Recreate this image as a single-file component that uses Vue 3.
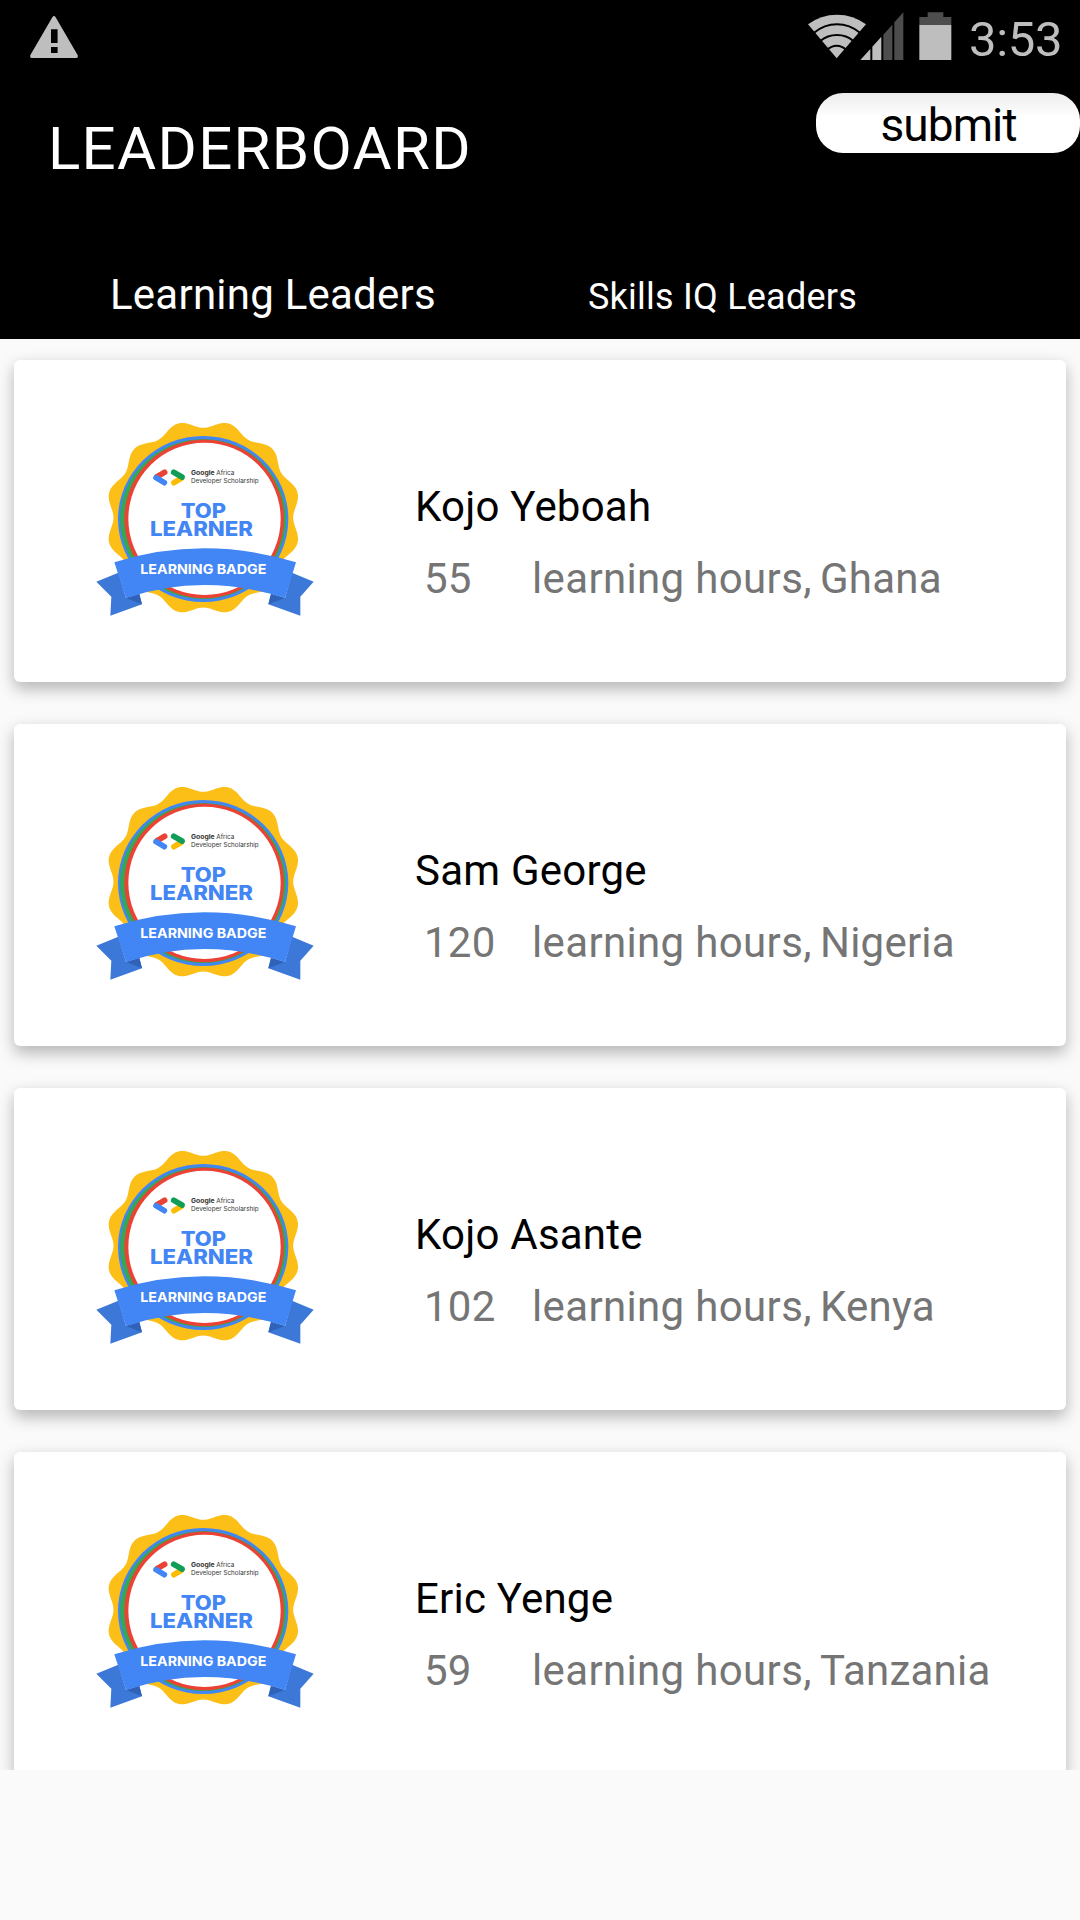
<script setup>
const leaders = [
  { name: 'Kojo Yeboah', hours: 55, country: 'Ghana' },
  { name: 'Sam George', hours: 120, country: 'Nigeria' },
  { name: 'Kojo Asante', hours: 102, country: 'Kenya' },
  { name: 'Eric Yenge', hours: 59, country: 'Tanzania' },
]

// Twelve-lobed scalloped edge of the badge
const scallop = Array.from({ length: 240 }, (_, i) => {
  const a = (i * 2 * Math.PI) / 240
  const r = 281 - 11.5 * Math.cos(12 * a)
  return `${(370 + r * Math.sin(a)).toFixed(1)},${(353 - r * Math.cos(a)).toFixed(1)}`
}).join(' ')
</script>

<template>
  <div class="screen">
    <header class="header">
      <div class="status">
        <svg class="warning" width="48" height="42" viewBox="0 0 48 42">
          <path fill="#bebebe" fill-rule="evenodd" d="M22.5 1Q24 -1 25.5 1L47.6 39Q48.6 42 46 42H2Q-.6 42 .4 39ZM21 13.3V27H27.6V13.3ZM21 31V37H27.6V31Z" />
        </svg>
        <svg class="indicators" width="144" height="60" viewBox="83 0 432 180">
          <path fill="#bebebe" d="M83 73Q121 44 170 44T257 73L169 175Z" />
          <g fill="none" stroke="#000" stroke-width="6">
            <path d="M100 99Q132 73 170 73T240 99" />
            <path d="M120 123Q141 105 170 105T219 123" />
            <path d="M140 150Q153 137 169 137T198 150" />
          </g>
          <path fill="#bebebe" d="M240 180L270 147V180ZM276 140L303 110V180H276Z" />
          <path fill="#4d4d4d" d="M309 104L336 74V180H309ZM342 67L369 37V180H342ZM442 37H489V51H513V75H417V51H442Z" />
          <path fill="#bebebe" d="M417 75H513V180H417Z" />
        </svg>
        <span class="clock">3:53</span>
      </div>
      <div class="titlebar">
        <h1 class="title">LEADERBOARD</h1>
        <button class="submit"><span>submit</span></button>
      </div>
      <nav class="tabs">
        <span class="tab active">Learning Leaders</span>
        <span class="tab second">Skills IQ Leaders</span>
      </nav>
    </header>

    <main class="list">
      <article v-for="p in leaders" :key="p.name" class="card">
        <svg class="badge" width="250" height="230" viewBox="0 0 750 690">
          <polygon :points="scallop" fill="#fcbf17" />
          <ellipse cx="369.5" cy="357" rx="255.5" ry="249" fill="#4285f4" />
          <ellipse cx="369.5" cy="357" rx="249" ry="240" fill="#34a853" />
          <ellipse cx="372.5" cy="356.5" rx="239.5" ry="238" fill="#ea4335" />
          <circle cx="373.5" cy="356.5" r="228.5" fill="#fff" />
          <path fill="#3c78d8" d="M49 545L115 518L138 594L178 583L186 613L91 647L94 590ZM701 545L636 518L615 594L572 583L565 613L661 647V590Z" />
          <path fill="#2f62b8" d="M138 594L178 581L186 613ZM615 594L574 581L565 613Z" />
          <path fill="#4285f4" d="M103 487Q370 403 648 487L615 594Q370 516 138 594Z" />
          <g fill="none" stroke-width="17" stroke-linecap="round">
            <path stroke="#ea4335" d="M231 230L254 217" />
            <path stroke="#4285f4" d="M228 233L253 248" />
            <path stroke="#fbbc04" d="M282 248L305 234" />
            <path stroke="#0f9d58" d="M281 217L306 231" />
          </g>
          <g class="badge-small">
            <text class="strong" x="333" y="225" textLength="71" lengthAdjust="spacingAndGlyphs">Google</text>
            <text x="409" y="225" textLength="54" lengthAdjust="spacingAndGlyphs">Africa</text>
            <text x="333" y="250" textLength="203" lengthAdjust="spacingAndGlyphs">Developer Scholarship</text>
          </g>
          <g class="badge-big">
            <text x="302" y="353" textLength="136" lengthAdjust="spacingAndGlyphs">TOP</text>
            <text x="210" y="409" textLength="309" lengthAdjust="spacingAndGlyphs">LEARNER</text>
          </g>
          <text class="badge-ribbon" x="181" y="522" textLength="378" lengthAdjust="spacingAndGlyphs">LEARNING BADGE</text>
        </svg>
        <div class="info">
          <div class="name">{{ p.name }}</div>
          <div class="detail">
            <span class="hours">{{ p.hours }}</span>
            <span class="label">learning hours,</span>
            <span class="country">{{ p.country }}</span>
          </div>
        </div>
      </article>
    </main>
  </div>
</template>

<style>
body {
  background: #fafafa;
}
</style>

<style scoped>
.screen {
  width: 1080px;
  height: 1920px;
  overflow: hidden;
  background: #fafafa;
  font-family: Roboto, sans-serif;
}
.header {
  height: 339px;
  background: #000;
  color: #fff;
}
.status {
  display: flex;
  height: 75px;
  color: #bebebe;
}
.warning {
  margin: 16px 0 0 30px;
}
.indicators {
  margin-left: auto;
}
.clock {
  width: 112px;
  margin-left: 16px;
  padding-top: 12px;
  font-size: 49px;
  line-height: 56px;
  letter-spacing: -0.3px;
  text-indent: 1px;
  white-space: nowrap;
}
.titlebar {
  display: flex;
  justify-content: space-between;
  align-items: flex-start;
  height: 175px;
  padding-top: 18px;
  box-sizing: border-box;
}
.title {
  margin: 20px 0 0 48px;
  font-size: 60px;
  line-height: 72px;
  font-weight: 400;
  letter-spacing: 1.3px;
}
.submit {
  width: 264px;
  height: 60px;
  padding: 4px 0 0 1px;
  border: 0;
  border-radius: 27px;
  background: linear-gradient(#ececec, #fff 40%);
  color: #000;
  font-family: inherit;
  font-size: 46px;
  line-height: 56px;
  letter-spacing: -0.9px;
  white-space: nowrap;
}
.tabs {
  display: flex;
  align-items: baseline;
  height: 89px;
  padding-top: 20px;
  box-sizing: border-box;
  line-height: 50px;
  letter-spacing: 0.23px;
  white-space: nowrap;
}
.tab {
  width: 476px;
  font-size: 42px;
}
.active {
  margin-left: 110px;
}
.second {
  width: auto;
  margin-left: 2px;
  font-size: 36px;
}
.list {
  height: 1431px;
  overflow: hidden;
  padding: 21px 14px 0;
  box-sizing: border-box;
}
.card {
  display: flex;
  height: 322px;
  margin-bottom: 42px;
  border-radius: 6px;
  background: #fff;
  box-shadow: 0 6.5px 16px rgba(0, 0, 0, 0.28);
}
.badge {
  flex: none;
  margin: 40px 0 0 66px;
}
.badge-small {
  font-family: Inter, sans-serif;
  font-size: 20px;
  fill: #333;
}
.strong {
  font-weight: 700;
}
.badge-big {
  font-family: Inter, sans-serif;
  font-weight: 800;
  font-size: 59px;
  fill: #4285f4;
}
.badge-ribbon {
  font-family: Inter, sans-serif;
  font-weight: 700;
  font-size: 40px;
  fill: #fff;
}
.info {
  margin: 122px 0 0 85px;
  font-size: 42px;
  line-height: 50px;
  letter-spacing: 0.22px;
  white-space: nowrap;
}
.name {
  height: 72px;
  color: #000;
}
.detail {
  display: flex;
  color: #757575;
}
.hours {
  width: 108px;
  margin-left: 9px;
}
.label {
  width: 288px;
  letter-spacing: 0.35px;
}
</style>
